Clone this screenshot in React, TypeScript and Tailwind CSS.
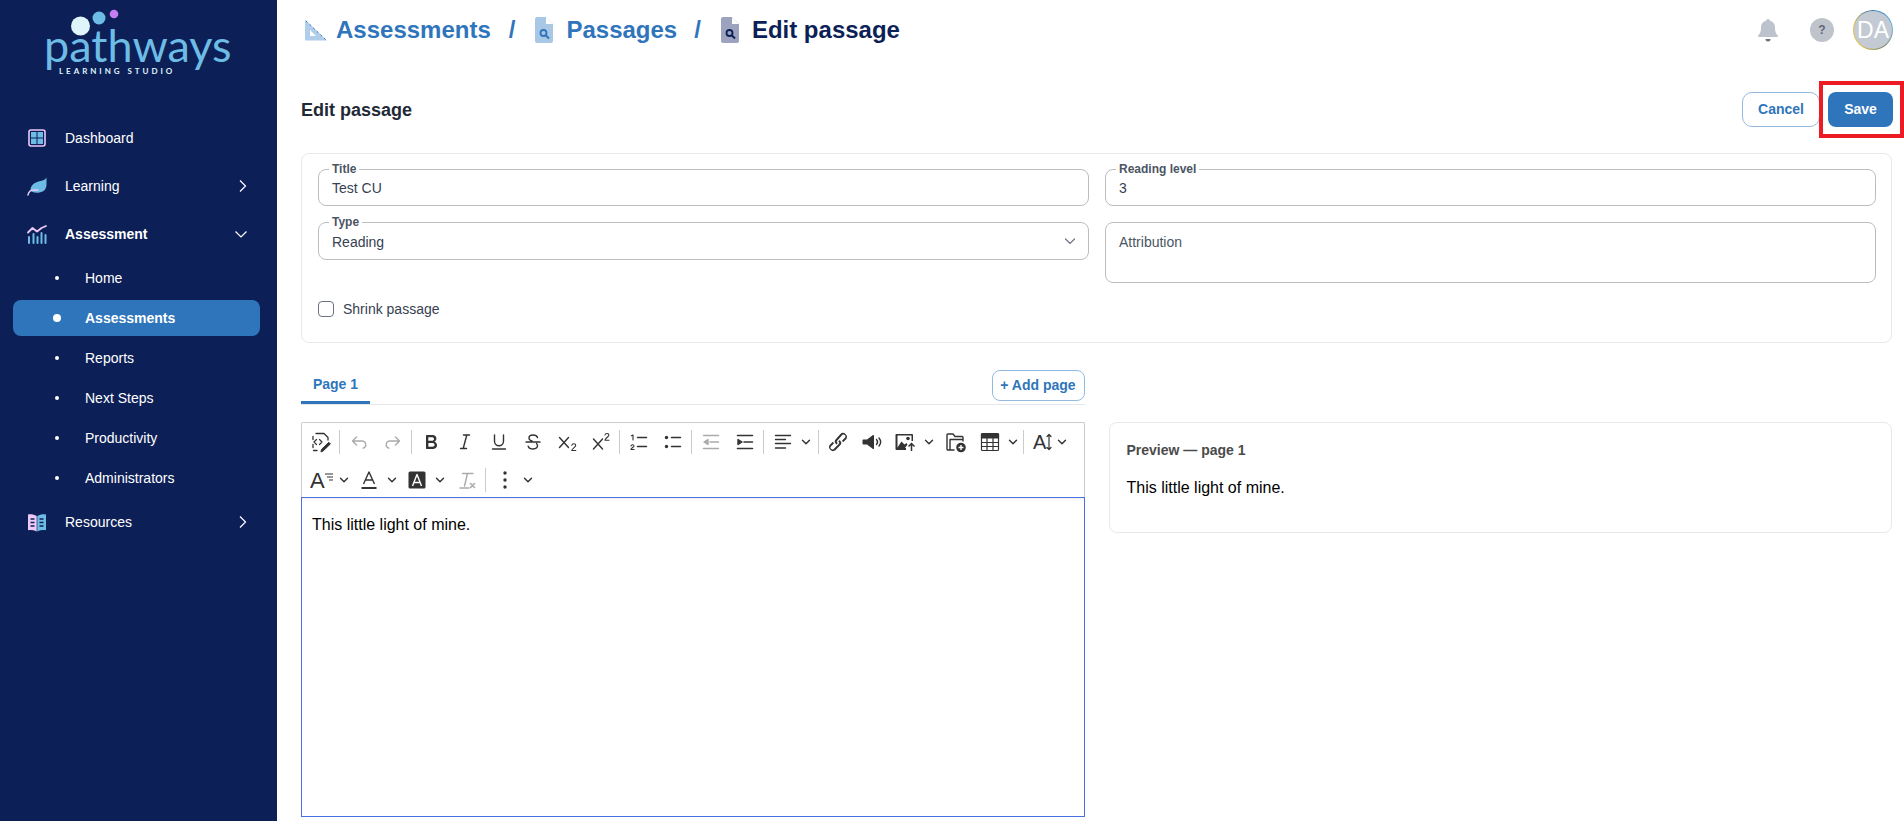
import type { ReactNode } from 'react';

const DARK = '#333';
const MUTED = '#aaa';

// 24x24 toolbar glyph
function Glyph({ children, color = DARK }: { children: ReactNode; color?: string }) {
  return (
    <svg
      width="24"
      height="24"
      viewBox="0 0 24 24"
      fill="none"
      stroke={color}
      strokeWidth="1.4"
      strokeLinecap="round"
      strokeLinejoin="round"
    >
      {children}
    </svg>
  );
}

function Caret() {
  return (
    <svg width="10" height="10" viewBox="0 0 10 10" fill="none" stroke={DARK} strokeWidth="1.4" strokeLinecap="round" strokeLinejoin="round">
      <path d="M1.5 3.2 5 6.8l3.5-3.6" />
    </svg>
  );
}

function Btn({ children }: { children: ReactNode }) {
  return <div className="w-[34px] h-[34px] shrink-0 flex items-center justify-center">{children}</div>;
}

function MenuBtn({ children, width = 'w-[49px]' }: { children: ReactNode; width?: string }) {
  return (
    <div className={`${width} h-[34px] shrink-0 flex items-center pl-[5px] gap-[6px]`}>
      {children}
      <Caret />
    </div>
  );
}

function Sep() {
  return <div className="w-px h-6 bg-[#ccc] shrink-0 ml-px mr-[2px]" />;
}

function Toolbar() {
  return (
    <div className="border border-b-0 border-[#ccc] rounded-t-[2px] h-[75px] pl-[2px] pt-[2px] flex flex-col gap-1">
      <div className="flex items-center h-[34px]">
        <Btn>
          <Glyph>
            <path d="M7 3.500h8l4 4V10M4 6.500v3M4 14.500v3M4.500 20.500H8" strokeWidth="1.300" />
            <path d="M7.500 9.500 5 12l2.500 2.500M10.500 9.500 13 12l-2.500 2.500" strokeWidth="1.200" />
            <path d="m12 21.500.6-2.200 7.200-7 1.600 1.600-7.200 7z" fill={DARK} strokeWidth="1" />
          </Glyph>
        </Btn>
        <Sep />
        <Btn>
          <Glyph color={MUTED}>
            <path d="M9.500 7 5.500 11l4 4M5.500 11H15a3.800 3.800 0 0 1 3.800 3.800 3.600 3.600 0 0 1-2.600 3.400" />
          </Glyph>
        </Btn>
        <Btn>
          <Glyph color={MUTED}>
            <path d="m14.500 7 4 4-4 4M18.500 11H9a3.800 3.800 0 0 0-3.800 3.800A3.600 3.600 0 0 0 7.800 18.200" />
          </Glyph>
        </Btn>
        <Sep />
        <Btn>
          <svg width="24" height="24" viewBox="0 0 24 24" fill={DARK}>
            <path d="M7.800 19c-.3 0-.5 0-.6-.2l-.2-.5V5.700c0-.2 0-.4.2-.5l.6-.2h5c1.500 0 2.700.3 3.500 1 .7.6 1.100 1.400 1.100 2.500a3 3 0 0 1-.6 1.900c-.4.6-1 1-1.600 1.200.4.1.9.3 1.300.6s.8.7 1 1.200c.4.4.5 1 .5 1.600 0 1.300-.4 2.300-1.300 3-.8.7-2.100 1-3.800 1H7.800zm5-8.300c.6 0 1.200-.1 1.600-.5.4-.3.6-.7.6-1.300 0-1.100-.8-1.700-2.300-1.700H9.300v3.500h3.500zm.5 6c.7 0 1.300-.1 1.700-.4.4-.4.6-.9.6-1.500s-.2-1-.7-1.400c-.4-.3-1-.4-2-.4H9.400v3.800h3.900z" />
          </svg>
        </Btn>
        <Btn>
          <Glyph>
            <path d="M10.500 5h6M7.500 18.500h6M13.800 5l-3.600 13.500" />
          </Glyph>
        </Btn>
        <Btn>
          <Glyph>
            <path d="M7.500 5v6.200a4.500 4.500 0 0 0 9 0V5M5.500 19h13" />
          </Glyph>
        </Btn>
        <Btn>
          <Glyph>
            <path d="M16.500 7.500C16 5.800 14.300 5 12 5 9.500 5 8 6.200 8 8c0 1.500 1 2.500 3 3M15.500 13.500c.7.600 1 1.300 1 2.100 0 2-1.800 3.400-4.500 3.400-2.500 0-4.200-1-4.800-2.800M5 12h14" />
          </Glyph>
        </Btn>
        <Btn>
          <Glyph>
            <path d="m4.500 7.500 9 10M13.500 7.500l-9 10" />
            <path d="M16.800 15.300c.2-1 1-1.500 2-1.500 1.100 0 1.900.6 1.900 1.600 0 1.800-3.800 3.100-3.900 5.100h4" strokeWidth="1.100" />
          </Glyph>
        </Btn>
        <Btn>
          <Glyph>
            <path d="m4.500 9 9 10M13.500 9l-9 10" />
            <path d="M16 5c.2-1 1-1.500 2-1.500 1.100 0 1.900.6 1.900 1.600 0 1.800-3.800 3.100-3.900 5.100h4" strokeWidth="1.100" />
          </Glyph>
        </Btn>
        <Sep />
        <Btn>
          <Glyph>
            <path d="M10.500 7.500h9M10.500 16.500h9" strokeWidth="1.500" />
            <path d="M4.500 5.800 6 5v5M4 16c.2-.8.8-1.200 1.500-1.200.9 0 1.500.5 1.500 1.200 0 1.200-2.900 2-3 3.500h3.200" strokeWidth="1.100" />
          </Glyph>
        </Btn>
        <Btn>
          <Glyph>
            <path d="M10.500 7.500h9M10.500 16.500h9" strokeWidth="1.500" />
            <circle cx="5.500" cy="7.500" r="1.700" fill={DARK} stroke="none" />
            <circle cx="5.500" cy="16.500" r="1.700" fill={DARK} stroke="none" />
          </Glyph>
        </Btn>
        <Sep />
        <Btn>
          <Glyph color={MUTED}>
            <path d="M4.500 5.500h15M11 12h8.500M4.500 18.500h15" />
            <path d="m5 12 4-2.500v5z" fill={MUTED} />
          </Glyph>
        </Btn>
        <Btn>
          <Glyph>
            <path d="M4.500 5.500h15M11 12h8.500M4.500 18.500h15" strokeWidth="1.600" />
            <path d="m9 12-4-2.500v5z" fill={DARK} />
          </Glyph>
        </Btn>
        <Sep />
        <MenuBtn width="w-[51px]">
          <Glyph>
            <path d="M4.500 5.500h15M4.500 9.500h10M4.500 13.500h15M4.500 18h10" />
          </Glyph>
        </MenuBtn>
        <Sep />
        <Btn>
          <svg width="24" height="24" viewBox="0 0 24 24" fill={DARK}>
            <path d="M6.200 12.300a1 1 0 0 1 1.400 1.400l-2 2a2 2 0 1 0 2.600 2.800l4.800-4.800a1 1 0 0 0 0-1.400 1 1 0 1 1 1.400-1.300 2.900 2.900 0 0 1 0 4L9.600 20a3.900 3.900 0 0 1-5.500-5.500l2-2zm11.600-.6a1 1 0 0 1-1.400-1.400l2-2a2 2 0 1 0-2.600-2.800L11 10.900a1 1 0 0 0 0 1.400 1 1 0 1 1-1.400 1.300 2.900 2.900 0 0 1 0-4L14.400 4a3.900 3.900 0 0 1 5.500 5.500l-2 2z" />
          </svg>
        </Btn>
        <Btn>
          <svg width="24" height="24" viewBox="0 0 24 24" fill={DARK}>
            <path d="M3 9.500h4l6-4.500c.5-.3 1 0 1 .6v12.800c0 .6-.5.9-1 .6l-6-4.500H3.500a1 1 0 0 1-1-1V10.500a1 1 0 0 1 .5-1z" />
            <path d="M16.500 9.500c1.300 1.500 1.300 3.500 0 5M19 8c2 2.400 2 5.600 0 8" fill="none" stroke={DARK} strokeWidth="1.400" strokeLinecap="round" />
          </svg>
        </Btn>
        <MenuBtn width="w-[50px]">
          <svg width="24" height="24" viewBox="0 0 24 24" fill={DARK}>
            <path d="M2 4h16a1 1 0 0 1 1 1v6h-1.500V5.500h-14V18H12v2H2.500a1 1 0 0 1-1-1V5a1 1 0 0 1 .5-1z" />
            <path d="m3 18 4.500-6.500 3 3 2-1.500 1 1.500-2.500 3.500z" />
            <circle cx="14" cy="8.500" r="1.800" />
            <path d="M17.500 21v-7M14.500 16.500l3-3 3 3" fill="none" stroke={DARK} strokeWidth="1.500" />
          </svg>
        </MenuBtn>
        <Btn>
          <svg width="24" height="24" viewBox="0 0 24 24" fill="none" stroke={DARK} strokeWidth="1.400" strokeLinejoin="round">
            <path d="M10.500 20H4a1 1 0 0 1-1-1V5a1 1 0 0 1 1-1h5l2 2.500h7a1 1 0 0 1 1 1v4" />
            <path d="M6 20V9.500h13" />
            <circle cx="17" cy="17.500" r="4.800" fill={DARK} stroke="none" />
            <path d="M17 15v5M14.500 17.500h5" stroke="#fff" />
          </svg>
        </Btn>
        <MenuBtn width="w-[49px]">
          <svg width="24" height="24" viewBox="0 0 24 24" fill="none" stroke={DARK} strokeWidth="1.200">
            <rect x="3.500" y="3.500" width="17" height="17" rx="1" />
            <path d="M3.500 4h17v4h-17z" fill={DARK} />
            <path d="M3.500 12.500h17M3.500 16.500h17M9 8v12.500M15 8v12.500" />
          </svg>
        </MenuBtn>
        <Sep />
        <div className="h-[34px] shrink-0 flex items-center pl-[7px] gap-[4px]">
          <span className="text-[20px] leading-none text-[#333] font-['Liberation_Sans',sans-serif] font-normal">A</span>
          <svg width="8" height="24" viewBox="0 0 8 24" fill="none" stroke={DARK} strokeWidth="1.200" strokeLinecap="round" strokeLinejoin="round" className="-ml-[5px]">
            <path d="M4 4.500v15M2 6.500l2-2 2 2M2 17.500l2 2 2-2" />
          </svg>
          <Caret />
        </div>
      </div>
      <div className="flex items-center h-[34px]">
        <MenuBtn width="w-[48px]">
          <div className="relative w-6 h-6 flex items-end pl-[1px]">
            <span className="text-[22px] leading-[23px] text-[#333] font-['Liberation_Sans',sans-serif]">A</span>
            <svg width="8" height="8" viewBox="0 0 8 8" stroke={DARK} strokeWidth="1.200" className="absolute right-0 top-[5px]">
              <path d="M0 1h8M2 4h6M4 7h4" />
            </svg>
          </div>
        </MenuBtn>
        <MenuBtn width="w-[48px]">
          <svg width="24" height="24" viewBox="0 0 24 24" fill="none" stroke={DARK} strokeWidth="1.400" strokeLinejoin="round">
            <path d="m6.500 16 5.500-12 5.500 12M8.500 12h7" />
            <path d="M4.500 20h15" strokeWidth="2" />
          </svg>
        </MenuBtn>
        <MenuBtn width="w-[50px]">
          <svg width="24" height="24" viewBox="0 0 24 24" fill="none">
            <rect x="3" y="3" width="17" height="17" rx="1.500" fill={DARK} transform="translate(.5 .5)" />
            <path d="m7.500 18 4.500-11.500L16.500 18M9 14.500h6" stroke="#fff" strokeWidth="1.400" strokeLinejoin="round" />
          </svg>
        </MenuBtn>
        <Btn>
          <Glyph color={MUTED}>
            <path d="M7.500 5.500H18M12.500 5.500 9.500 18M5 20h9" />
            <path d="m15.500 15.500 4 4M19.500 15.500l-4 4" strokeWidth="1.600" />
          </Glyph>
        </Btn>
        <Sep />
        <div className="w-[49px] h-[34px] shrink-0 flex items-center pl-[5px] gap-[6px]">
          <svg width="24" height="24" viewBox="0 0 24 24" fill={DARK}>
            <circle cx="12" cy="5" r="1.700" />
            <circle cx="12" cy="12" r="1.700" />
            <circle cx="12" cy="19" r="1.700" />
          </svg>
          <Caret />
        </div>
      </div>
    </div>
  );
}

function DashboardIcon() {
  return (
    <svg width="18" height="18" viewBox="0 0 18 18">
      <rect x="1" y="1" width="16" height="16" rx="2" fill="#0d1f57" stroke="#ecc9f7" strokeWidth="1.600" />
      <rect x="3" y="3" width="5.500" height="5.500" fill="#6cbce5" />
      <rect x="9.500" y="3" width="5.500" height="5.500" fill="#6cbce5" />
      <rect x="3" y="9.500" width="5.500" height="5.500" fill="#6cbce5" />
      <rect x="9.500" y="9.500" width="5.500" height="5.500" fill="#6cbce5" />
    </svg>
  );
}

function LeafIcon() {
  return (
    <svg width="20" height="19" viewBox="0 0 20 19">
      <path d="M19.500.5c-1 2-3 3-6 3.500C8 5 3.500 8 3.500 13.500c2 2 5 2.500 9 2 5-.8 7-4 7-8z" fill="#6cbce5" />
      <path d="M1 18c.5-3 2.500-5 6-5h4" fill="none" stroke="#ecc9f7" strokeWidth="1.500" strokeLinecap="round" />
    </svg>
  );
}

function ChartIcon() {
  return (
    <svg width="20" height="19" viewBox="0 0 20 19">
      <path d="M1 7.500 5.500 3l4.500 3.500L14.500 3 19 1" fill="none" stroke="#ecc9f7" strokeWidth="1.800" strokeLinecap="round" strokeLinejoin="round" />
      <path d="M2 12v6M6.500 9v9M10.500 12v6M14.500 8v10M18.500 10v8" stroke="#6cbce5" strokeWidth="2" strokeLinecap="round" />
    </svg>
  );
}

function BookIcon() {
  return (
    <svg width="20" height="19" viewBox="0 0 20 19">
      <path d="M1 1.500C4 1 7 1.500 9.700 3v15.500C7 17.200 4 16.800 1 17.300z" fill="#ecc9f7" />
      <path d="M19 1.500C16 1 13 1.500 10.300 3v15.500c2.700-1.300 5.700-1.700 8.700-1.200z" fill="#6cbce5" />
      <path d="M3.500 6h4M3.500 9.500h4M3.500 13h4M12.500 6h4M12.500 9.500h4M12.500 13h4" stroke="#0d1f57" strokeWidth="1.300" />
    </svg>
  );
}

function NavRow({ icon, label, bold, chevron, className }: { icon: ReactNode; label: string; bold?: boolean; chevron?: 'right' | 'down'; className: string }) {
  return (
    <div className={`flex items-center pl-[27px] pr-[29px] ${className}`}>
      <div className="w-5 flex justify-center shrink-0">{icon}</div>
      <span className={`ml-[18px] flex-1 text-white text-[14px] ${bold ? 'font-bold' : ''}`}>{label}</span>
      {chevron === 'right' && (
        <svg width="12" height="14" viewBox="0 0 12 14" fill="none" stroke="#fff" strokeWidth="1.200">
          <path d="m4 1.500 5.500 5.500L4 12.500" />
        </svg>
      )}
      {chevron === 'down' && (
        <svg width="14" height="12" viewBox="0 0 14 12" fill="none" stroke="#fff" strokeWidth="1.200">
          <path d="M1.500 3.500 7 9l5.500-5.500" />
        </svg>
      )}
    </div>
  );
}

function SubRow({ label, active }: { label: string; active?: boolean }) {
  return (
    <div className={`h-9 my-[2px] ml-[13px] mr-[17px] flex items-center pl-[44px] rounded-lg ${active ? 'bg-[#2f75bb]' : ''}`}>
      <span className="w-0 flex justify-center">
        <span className={`rounded-full bg-white shrink-0 ${active ? 'w-2 h-2' : 'w-1 h-1'}`} />
      </span>
      <span className={`ml-[28px] text-white text-[14px] ${active ? 'font-bold' : ''}`}>{label}</span>
    </div>
  );
}

function Sidebar() {
  return (
    <aside className="w-[277px] shrink-0 bg-[#0d1f57] flex flex-col">
      <div className="h-[114px] pl-[44px] relative">
        <svg width="80" height="30" viewBox="0 0 80 30" className="absolute left-[66px] top-[8px]">
          <circle cx="14.500" cy="18" r="9.500" fill="#dff5fb" />
          <circle cx="33" cy="10" r="6.500" fill="#6cbce5" />
          <circle cx="48" cy="6" r="4.300" fill="#c77df2" />
        </svg>
        <div className="pt-[25px] text-[45px] leading-[40px] font-['Lato',sans-serif] font-normal text-[#6cbce5]">pathways</div>
        <div className="pl-[15px] mt-px text-[8px] leading-[10px] tracking-[2.950px] font-['Lato',sans-serif] font-bold text-[#dff5fb] whitespace-nowrap">LEARNING STUDIO</div>
      </div>
      <NavRow icon={<DashboardIcon />} label="Dashboard" className="h-12" />
      <NavRow icon={<LeafIcon />} label="Learning" chevron="right" className="h-12" />
      <NavRow icon={<ChartIcon />} label="Assessment" bold chevron="down" className="h-12" />
      <SubRow label="Home" />
      <SubRow label="Assessments" active />
      <SubRow label="Reports" />
      <SubRow label="Next Steps" />
      <SubRow label="Productivity" />
      <SubRow label="Administrators" />
      <NavRow icon={<BookIcon />} label="Resources" chevron="right" className="h-12" />
    </aside>
  );
}

function Crumbs() {
  return (
    <div className="flex items-center text-[24px] font-bold text-[#2f75bb]">
      <svg width="24" height="24" viewBox="0 0 24 24" className="ml-[3px] mr-[8px]">
        <path d="M1 1.500 23 22.500H2a1 1 0 0 1-1-1zM6 12v6h6z" fill="#b0cde9" fillRule="evenodd" />
        <path d="m2 3 20 19" stroke="#2f75bb" strokeWidth="1" strokeDasharray="2 3" />
      </svg>
      <span>Assessments</span>
      <span className="ml-[18px] mr-[19px]">/</span>
      <svg width="20" height="26" viewBox="0 0 20 26" className="mr-[12px]">
        <path d="M3 0h9l7 7v17a2 2 0 0 1-2 2H3a2 2 0 0 1-2-2V2a2 2 0 0 1 2-2z" fill="#a9c8e6" />
        <path d="m12 0 7 7h-7z" fill="#fff" />
        <circle cx="9.500" cy="16" r="3" fill="none" stroke="#2f75bb" strokeWidth="1.800" />
        <path d="m12 18.500 3 3" stroke="#2f75bb" strokeWidth="2" />
      </svg>
      <span>Passages</span>
      <span className="ml-[17px] mr-[19px]">/</span>
      <svg width="20" height="26" viewBox="0 0 20 26" className="mr-[12px]">
        <path d="M3 0h9l7 7v17a2 2 0 0 1-2 2H3a2 2 0 0 1-2-2V2a2 2 0 0 1 2-2z" fill="#9ca3bf" />
        <path d="m12 0 7 7h-7z" fill="#fff" />
        <circle cx="9.500" cy="16" r="3" fill="none" stroke="#0d1f57" strokeWidth="1.800" />
        <path d="m12 18.500 3 3" stroke="#0d1f57" strokeWidth="2" />
      </svg>
      <span className="text-[#0d1f57]">Edit passage</span>
    </div>
  );
}

function HeaderIcons() {
  return (
    <div className="flex items-center">
      <svg width="22" height="24" viewBox="0 0 22 24" fill="#bcc3cc" className="mr-[31px]">
        <path d="M11 1a2 2 0 0 1 2 1.800c3.500.9 5 3.700 5 7.200 0 3.500.8 5.500 2.800 7.500.5.600.2 1.500-.7 1.500H1.900c-.9 0-1.200-.9-.7-1.500C3.200 15.500 4 13.500 4 10c0-3.500 1.500-6.300 5-7.200A2 2 0 0 1 11 1z" />
        <path d="M8.500 21h5a2.500 2.500 0 0 1-5 0z" fill="#6b7280" />
      </svg>
      <div className="w-6 h-6 rounded-full bg-[#bfc4cc] flex items-center justify-center text-[12px] font-bold text-[#5f6774] mr-[19px]">?</div>
      <div className="w-10 h-10 rounded-full p-px bg-[conic-gradient(#2f75bb,#6cbce5,#7a8a6a,#e2c04a,#e2c04a,#2f75bb)]">
        <div className="w-full h-full rounded-full bg-[#c3cad4] flex items-center justify-center text-[23px] text-white font-['Liberation_Sans',sans-serif]">DA</div>
      </div>
    </div>
  );
}

function Field({ label, value, className }: { label: string; value: string; className: string }) {
  return (
    <div className={`relative border border-[#bdbdbd] rounded-lg flex items-center pl-[13px] text-[14px] text-[#374151] ${className}`}>
      <span className="absolute left-[10px] -top-[8px] bg-white px-[3px] text-[12px] leading-[14px] font-bold text-[#4b5563]">{label}</span>
      <span className="pt-[2px]">{value}</span>
    </div>
  );
}

export default function App() {
  return (
    <div className="flex h-[821px] overflow-hidden bg-white font-['Liberation_Sans',Arial,sans-serif]">
      <Sidebar />
      <main className="flex-1 min-w-0 pl-6 pr-3">
        <header className="h-[60px] flex items-center justify-between -mr-px">
          <Crumbs />
          <HeaderIcons />
        </header>

        <div className="mt-8 flex items-center justify-between h-[35px] -mr-px">
          <h1 className="text-[18px] leading-[22px] font-bold text-[#1f2937]">Edit passage</h1>
          <div className="flex gap-2">
            <button type="button" className="w-[78px] h-[35px] rounded-[10px] border border-[#93bbe2] bg-white text-[14px] font-bold text-[#2f75bb]">
              Cancel
            </button>
            <div className="relative">
              <button type="button" className="w-[65px] h-[35px] rounded-lg bg-[#2f75bb] text-[14px] font-bold text-white">
                Save
              </button>
              <div className="absolute -left-[9px] -right-[11px] -top-[11px] -bottom-[11px] border-4 border-[#ed1c24]" />
            </div>
          </div>
        </div>

        <section className="mt-[26px] h-[190px] border border-[#e8e8e8] rounded-lg pl-4 pr-[15px] pt-[15px]">
          <div className="grid grid-cols-2 gap-x-4 gap-y-4 items-start">
            <Field label="Title" value="Test CU" className="h-[37px]" />
            <Field label="Reading level" value="3" className="h-[37px]" />
            <div className="relative border border-[#bdbdbd] rounded-lg h-[38px] flex items-center justify-between pl-[13px] pr-[12px] text-[14px] text-[#374151]">
              <span className="absolute left-[10px] -top-[8px] bg-white px-[3px] text-[12px] leading-[14px] font-bold text-[#4b5563]">Type</span>
              <span className="pt-[2px]">Reading</span>
              <svg width="12" height="12" viewBox="0 0 12 12" fill="none" stroke="#6b7280" strokeWidth="1.200" strokeLinecap="round">
                <path d="m1.500 4 4.500 4.500L10.500 4" />
              </svg>
            </div>
            <div className="border border-[#bdbdbd] rounded-lg h-[61px] pl-[13px] pt-[11px] text-[14px] leading-[16px] text-[#4b5563]">Attribution</div>
          </div>
          <label className="mt-4 h-5 leading-5 flex items-center gap-[9px] text-[14px] text-[#374151]">
            <span className="w-4 h-4 rounded-[4px] border border-[#6b7280] bg-white" />
            Shrink passage
          </label>
        </section>

        <div className="mt-[27px] grid grid-cols-2 gap-x-6">
          <div className="flex flex-col">
            <div className="flex items-start justify-between h-[35px] border-b border-[#e5e7eb]">
              <div className="w-[69px] h-[34px] border-b-[3px] border-[#2f75bb] flex items-start justify-center pt-[4px] text-[14px] font-bold text-[#2f75bb]">Page 1</div>
              <button type="button" className="w-[93px] h-[31px] rounded-lg border border-[#93bbe2] text-[14px] font-bold text-[#2f75bb]">+ Add page</button>
            </div>
            <div className="mt-[17px]">
              <Toolbar />
              <div className="h-[320px] border border-[#4a6fe0] shadow-[inset_0_4px_4px_-4px_rgba(0,0,0,0.12)] pl-[10px] pt-[17px] text-[16px] leading-[20px] text-black">
                This little light of mine.
              </div>
            </div>
          </div>
          <div className="pt-[52px]">
            <div className="h-[111px] border border-[#e8e8e8] rounded-lg pl-[17px] pt-[19px]">
              <div className="text-[14px] leading-[16px] font-bold text-[#4b4b4b]">Preview — page 1</div>
              <p className="mt-[20px] text-[16px] leading-[20px] text-black">This little light of mine.</p>
            </div>
          </div>
        </div>
      </main>
    </div>
  );
}
